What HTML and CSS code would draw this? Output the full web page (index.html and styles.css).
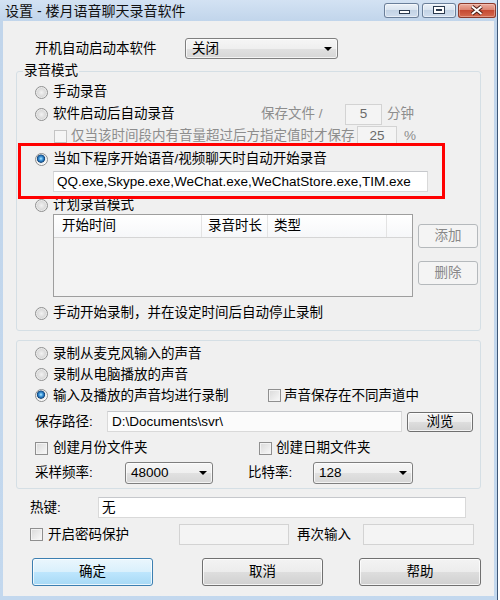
FILE: index.html
```html
<!DOCTYPE html>
<html lang="zh-CN">
<head>
<meta charset="utf-8">
<title>设置 - 楼月语音聊天录音软件</title>
<link rel="stylesheet" href="styles.css">
</head>
<body>
<div class="window">
  <div class="titlebar">
    <span class="title">设置 - 楼月语音聊天录音软件</span>
    <div class="caption">
      <span class="cap cap-min"><svg width="35" height="15" viewBox="0 0 35 15"><rect x="15.5" y="7.5" width="10" height="3" fill="#fff" stroke="#2b3a4e"/></svg></span>
      <span class="cap cap-max"><svg width="34" height="15" viewBox="0 0 34 15"><rect x="11.5" y="3.5" width="11" height="7" fill="#fff" stroke="#2b3a4e"/><rect x="14" y="6" width="6" height="2" fill="#2b3a4e"/></svg></span>
      <span class="cap cap-close"><svg width="38" height="15" viewBox="0 0 38 15"><path d="M14 3.5 L23.5 11 M23.5 3.5 L14 11" stroke="#4a1c14" stroke-width="4" fill="none"/><path d="M14 3.5 L23.5 11 M23.5 3.5 L14 11" stroke="#fff" stroke-width="2" fill="none"/></svg></span>
    </div>
  </div>
  <div class="client">
    <div class="row autostart">
      <span class="w150">开机自动启动本软件</span>
      <div class="combo c1"><span>关闭</span><i class="arrow"></i></div>
    </div>

    <div class="group g1">
      <span class="legend">录音模式</span>
      <div class="row r22"><span class="radio"></span><span>手动录音</span></div>
      <div class="row r22">
        <div class="opt w226"><span class="radio"></span><span>软件启动后自动录音</span></div>
        <span class="gray w84">保存文件 /</span>
        <div class="edit dis e5">5</div>
        <span class="gray ml5">分钟</span>
      </div>
      <div class="row r22">
        <span class="check dis ml19"></span>
        <span class="gray ml4 w286">仅当该时间段内有音量超过后方指定值时才保存</span>
        <div class="edit dis e25">25</div>
        <span class="gray ml7">%</span>
      </div>
      <div class="row r22 mt1"><span class="radio on"></span><span>当如下程序开始语音/视频聊天时自动开始录音</span></div>
      <div class="edit eqq">QQ.exe,Skype.exe,WeChat.exe,WeChatStore.exe,TIM.exe</div>
      <div class="row r18 mt4"><span class="radio"></span><span>计划录音模式</span></div>
      <div class="tablerow">
        <div class="list">
          <div class="list-head"><span class="pl8">开始时间</span><span>录音时长</span><span>类型</span><span></span></div>
        </div>
        <div class="sidebtns">
          <div class="btn dis sb1">添加</div>
          <div class="btn dis sb2">删除</div>
        </div>
      </div>
      <div class="row r22 mt5"><span class="radio"></span><span>手动开始录制，并在设定时间后自动停止录制</span></div>
      <div class="highlight"></div>
    </div>

    <div class="group g2">
      <div class="row r21"><span class="radio"></span><span>录制从麦克风输入的声音</span></div>
      <div class="row r21"><span class="radio"></span><span>录制从电脑播放的声音</span></div>
      <div class="row r21">
        <div class="opt w233"><span class="radio on"></span><span>输入及播放的声音均进行录制</span></div>
        <span class="check"></span><span class="ml3">声音保存在不同声道中</span>
      </div>
      <div class="row r21 mt5">
        <span class="w72">保存路径:</span>
        <div class="edit epath">D:\Documents\svr\</div>
        <div class="btn bbrowse">浏览</div>
      </div>
      <div class="row r20 mt6">
        <div class="opt w224"><span class="check"></span><span class="ml5">创建月份文件夹</span></div>
        <span class="check"></span><span class="ml4">创建日期文件夹</span>
      </div>
      <div class="row r22 mt4">
        <span class="w90">采样频率:</span>
        <div class="combo c2"><span>48000</span><i class="arrow"></i></div>
        <span class="ml35 w65">比特率:</span>
        <div class="combo c3"><span>128</span><i class="arrow"></i></div>
      </div>
    </div>

    <div class="row r21 mt8 pl27">
      <span class="w68">热键:</span>
      <div class="edit ehot">无</div>
    </div>
    <div class="row r21 mt6 pl27">
      <div class="opt w149"><span class="check"></span><span class="ml5">开启密码保护</span></div>
      <div class="edit dis epw1"></div>
      <span class="ml8 w66">再次输入</span>
      <div class="edit dis epw2"></div>
    </div>
    <div class="row btnrow">
      <div class="btn def b1">确定</div>
      <div class="btn b2">取消</div>
      <div class="btn b3">帮助</div>
    </div>
  </div>
</div>
</body>
</html>
```
FILE: styles.css
```css
* { box-sizing: border-box; }
html, body { margin: 0; padding: 0; background: #fff; }
body {
  font-family: "Liberation Sans", "Noto Sans CJK SC", sans-serif;
  font-size: 13.5px;
  line-height: 16px;
  color: #000;
}
.window {
  width: 498px;
  height: 600px;
  border-right: 1px solid #3f5877;
  background: linear-gradient(to bottom, #d3e2f3 0, #c1d5eb 21px, #c3d8ee 100%);
  display: flex;
  flex-direction: column;
}
.titlebar {
  height: 21px;
  flex: none;
  display: flex;
  align-items: flex-start;
  padding-left: 5px;
  padding-right: 1px;
}
.title { font-size: 14px; line-height: 22px; color: #111; }
.caption { margin-left: auto; display: flex; padding-top: 3px; }
.cap { display: block; height: 15px; border-radius: 3px; }
.cap svg { display: block; }
.cap-min, .cap-max {
  background: linear-gradient(#eef3f9 0, #d8e3ef 50%, #c3d3e5 50%, #d2dff0 100%);
  box-shadow: inset 0 0 0 1px #6a7f9a, inset 0 0 0 2px rgba(255,255,255,0.5);
}
.cap-min { width: 35px; }
.cap-max { width: 34px; margin-left: 3px; }
.cap-close {
  width: 38px;
  margin-left: 2px;
  background: linear-gradient(#eeb4a6 0, #d9806c 50%, #c54a33 50%, #d76e52 100%);
  box-shadow: inset 0 0 0 1px #8a392b, inset 0 0 0 2px rgba(255,220,210,0.4);
}

.client {
  margin-left: 3px;
  width: 491px;
  height: 575px;
  background: #f0f0f0;
}
.row { display: flex; align-items: center; }
.r22 { height: 22px; }
.r21 { height: 21px; }
.r20 { height: 20px; }
.r18 { height: 18px; }
.mt1 { margin-top: 1px; }
.mt4 { margin-top: 4px; }
.mt5 { margin-top: 5px; }
.mt6 { margin-top: 6px; }
.mt8 { margin-top: 8px; }
.ml3 { margin-left: 3px; }
.ml4 { margin-left: 4px; }
.ml5 { margin-left: 5px; }
.ml7 { margin-left: 7px; }
.ml8 { margin-left: 8px; }
.ml19 { margin-left: 19px; }
.ml35 { margin-left: 35px; }
.pl27 { padding-left: 27px; }
.pl8 { padding-left: 8px !important; }
.w65 { width: 65px; flex: none; }
.w66 { width: 66px; flex: none; }
.w68 { width: 68px; flex: none; }
.w72 { width: 72px; flex: none; }
.w84 { width: 84px; flex: none; }
.w90 { width: 90px; flex: none; }
.w149 { width: 149px; flex: none; }
.w150 { width: 150px; flex: none; }
.w224 { width: 224px; flex: none; }
.w226 { width: 226px; flex: none; }
.w233 { width: 233px; flex: none; }
.w286 { width: 286px; flex: none; }
.opt { display: flex; align-items: center; }
.gray { color: #8d8d8d; }

.autostart { margin-top: 17px; height: 21px; padding-left: 32px; }

/* controls */
.radio {
  width: 13px; height: 13px; flex: none;
  margin-right: 5px;
  border-radius: 50%;
  border: 1px solid #8e8f8f;
  background: radial-gradient(circle at 50% 50%, #f2f2f2 0, #dadada 4px, #e9e9e9 5px, #fdfdfd 6px);
}
.radio.on {
  background: radial-gradient(circle at 45% 42%, #bdeeff 0, #4aa3e4 1.6px, #1e63a4 3.2px, #0f4479 3.8px, #e6e6e6 4.4px, #fdfdfd 6px);
}
.check {
  width: 13px; height: 13px; flex: none;
  border: 1px solid #8f8f8f;
  background: linear-gradient(135deg, #d9d9d9, #f9f9f9);
  box-shadow: inset 0 0 0 1px #f3f3f3;
}
.check.dis { border-color: #c4c4c4; background: #f5f5f5; box-shadow: none; }

.edit {
  height: 21px; flex: none;
  display: flex; align-items: center;
  padding-left: 3px;
  border: 1px solid #d9d9d9;
  border-top-color: #c6c8cc;
  background: #fff;
  white-space: nowrap;
}
.edit.dis {
  background: #f4f4f4;
  border-color: #d3d3d3;
  color: #6a6a6a;
  justify-content: center;
  padding: 0;
}
.e5 { width: 37px; }
.e25 { width: 40px; height: 20px; }
.eqq { width: 375px; margin-left: 18px; margin-top: 1px; }
.epath { width: 295px; padding-left: 4px; background: #fbfbfb; }
.ehot { width: 368px; }
.epw1 { width: 110px; }
.epw2 { width: 111px; }

.btn {
  display: flex; align-items: center; justify-content: center;
  flex: none;
  border: 1px solid #707070;
  border-radius: 3px;
  background: linear-gradient(#f3f3f3 0, #ececec 50%, #dedede 50%, #d0d0d0 100%);
  box-shadow: inset 0 0 0 1px rgba(255,255,255,0.75);
}
.btn.def {
  border-color: #3c7fb1;
  background: linear-gradient(#eaf6fd 0, #d9f0fc 50%, #bee6fd 50%, #a7d9f5 100%);
}
.btn.dis {
  border-color: #b5b9bc;
  background: #f4f4f4;
  color: #888;
  box-shadow: none;
}
.bbrowse { width: 66px; height: 20px; margin-left: 5px; }

.combo {
  display: flex; align-items: center;
  flex: none;
  padding: 0 5px 0 5px;
  border: 1px solid #7f7f7f;
  border-radius: 3px;
  background: linear-gradient(#f6f6f6 0, #efefef 50%, #e1e1e1 50%, #d6d6d6 100%);
  box-shadow: inset 0 0 0 1px rgba(255,255,255,0.7);
}
.c1 { width: 153px; height: 21px; padding-left: 6px; }
.c2 { width: 88px; height: 22px; }
.c3 { width: 100px; height: 22px; }
.arrow {
  margin-left: auto;
  width: 0; height: 0;
  border-left: 4px solid transparent;
  border-right: 4px solid transparent;
  border-top: 4px solid #000;
}

/* groups */
.group {
  position: relative;
  margin: 0 13px 0 13px;
  border: 1px solid #d5dfe5;
  border-radius: 3px;
  padding-left: 18px;
}
.g1 { margin-top: 12px; padding-top: 9px; padding-bottom: 6px; }
.g2 { margin-top: 9px; padding-top: 2px; padding-bottom: 4px; }
.legend {
  position: absolute;
  top: -9px; left: 6px;
  padding: 0 1px;
  background: #f0f0f0;
}
.highlight {
  position: absolute;
  left: 1px; top: 71px;
  width: 427px; height: 56px;
  border: 3px solid #ff0000;
  pointer-events: none;
}

.tablerow { display: flex; margin-left: 18px; }
.list {
  width: 360px; height: 83px; flex: none;
  border: 1px solid #9e9e9e;
  background: #f3f3f3;
}
.list-head {
  display: grid;
  grid-template-columns: 148px 66px 119px 1fr;
  height: 23px;
  background: linear-gradient(#ffffff, #f6f7f9);
  border-bottom: 1px solid #d5d5d5;
}
.list-head span {
  display: flex; align-items: center;
  padding-left: 6px;
  border-right: 1px solid #e3e3e3;
}
.list-head span:last-child { border-right: none; }
.sidebtns { display: flex; flex-direction: column; margin-left: 5px; }
.sb1 { width: 60px; height: 24px; margin-top: 10px; }
.sb2 { width: 60px; height: 24px; margin-top: 13px; }

.btnrow { margin-top: 13px; height: 28px; padding-left: 29px; }
.b1 { width: 121px; height: 28px; }
.b2 { width: 121px; height: 28px; margin-left: 49px; }
.b3 { width: 122px; height: 28px; margin-left: 36px; }
```
